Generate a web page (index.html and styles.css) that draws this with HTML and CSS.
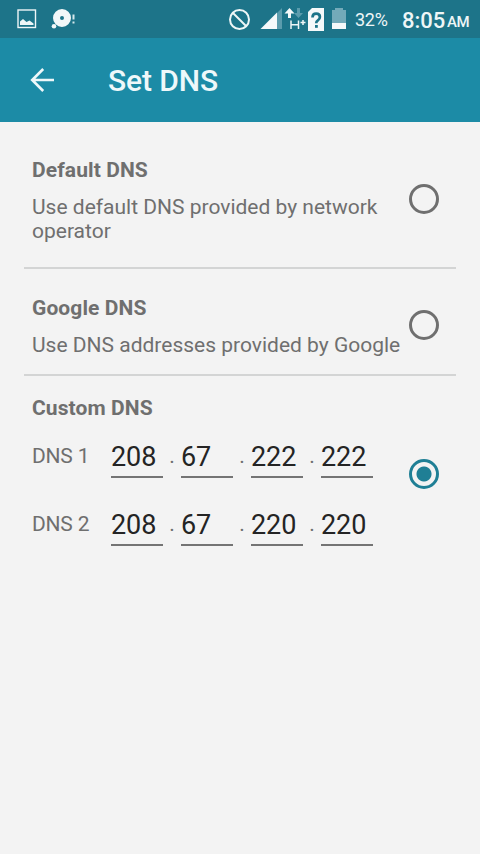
FILE: index.html
```html
<!DOCTYPE html>
<html lang="en">
<head>
<meta charset="utf-8">
<title>Set DNS</title>
<link rel="stylesheet" href="styles.css">
</head>
<body>
<div class="status">
  <svg class="notif" width="80" height="38" viewBox="0 0 80 38">
    <rect x="18" y="10" width="17.500" height="17.500" fill="none" stroke="#eef6f7" stroke-width="1.400"/>
    <path d="M20 25v-3.500l3-2.500 3.500 3 3-1.500 4 3V25z" fill="#eef6f7"/>
    <circle cx="62" cy="18" r="5.500" fill="none" stroke="#f2f7f8" stroke-width="7"/>
    <circle cx="54" cy="26.300" r="2.300" fill="#f2f7f8"/>
    <path d="M73.500 14.500v5M73.500 21.500v2" stroke="#d5e8ec" stroke-width="2"/>
  </svg>
  <svg class="signals" width="122" height="38" viewBox="226 0 122 38">
    <g fill="none" stroke="#eef6f7" stroke-width="2">
      <circle cx="239.500" cy="19.500" r="9.500"/>
      <path d="M232.500 12.500l14 14"/>
    </g>
    <path d="M277 13l5-5v21h-5z" fill="#5b9cad"/>
    <path d="M260.500 29L277 12.500V29z" fill="#f5f9fa"/>
    <path d="M289.500 8l-5 5.500h3.500V18h3v-4.500h3.500z" fill="#f5f9fa"/>
    <path d="M298.500 18l-4.500-5h3V8h3v5h3z" fill="#5b9cad"/>
    <path d="M291 20.500V29M298.500 20.500V29M291 24.700h8M300.500 22.500h5M303 20v5" fill="none" stroke="#eef6f7" stroke-width="1.500"/>
    <path d="M312 8h12v23h-16V12z" fill="#f5f9fa"/>
    <path d="M312.500 17.500q0-3.800 3.700-3.800t3.700 3.300q0 2-2 3.300-1.700 1.100-1.700 3" fill="none" stroke="#1d7489" stroke-width="2.700"/>
    <rect x="315" y="25" width="2.800" height="2.800" fill="#1d7489"/>
    <path d="M332 10h3V8h8v2h3v13h-14z" fill="#73aab9"/>
    <path d="M332 23h14v6h-14z" fill="#f5f9fa"/>
  </svg>
  <span class="battery">32%</span>
  <span class="clock">8:05</span><span class="ampm">AM</span>
</div>
<header class="bar">
  <svg width="26" height="26" viewBox="0 0 26 26" fill="none" stroke="#eef8fa" stroke-width="2.600"><path d="M25 13H3M14.200 2L3.200 13l11 11"/></svg>
  <h1>Set DNS</h1>
</header>
<main>
  <section class="option default">
    <div class="copy"><h2>Default DNS</h2><p>Use default DNS provided by network operator</p></div>
    <span class="radio"></span>
  </section>
  <section class="option google">
    <div class="copy"><h2>Google DNS</h2><p>Use DNS addresses provided by Google</p></div>
    <span class="radio"></span>
  </section>
  <section class="option custom">
    <div class="copy">
      <h2>Custom DNS</h2>
      <div class="row"><span class="label">DNS 1</span><span class="field">208</span><i>.</i><span class="field">67</span><i>.</i><span class="field">222</span><i>.</i><span class="field">222</span></div>
      <div class="row"><span class="label">DNS 2</span><span class="field">208</span><i>.</i><span class="field">67</span><i>.</i><span class="field">220</span><i>.</i><span class="field">220</span></div>
    </div>
    <span class="radio checked"></span>
  </section>
</main>
</body>
</html>
```
FILE: styles.css
```css
* { box-sizing: border-box; }
body {
  margin: 0;
  min-height: 854px;
  background: #f3f3f3;
  color: #6f6f6f;
  font: 21px/24px Roboto, sans-serif;
}
h1, h2, p { margin: 0; }
.status {
  display: flex;
  height: 38px;
  background: #1d7489;
  color: #eef6f7;
  line-height: 38px;
  white-space: nowrap;
}
.status svg { flex: none; }
.notif { margin-right: 146px; }
.battery { width: 47px; padding-left: 7px; font-size: 18px; line-height: 40px; margin-right: 7px; letter-spacing: -0.3px; }
.clock { width: 45px; font-size: 22px; font-weight: 500; line-height: 41px; }
.ampm { font-size: 15px; font-weight: 500; line-height: 44px; letter-spacing: -0.5px; }
.bar {
  display: flex;
  align-items: center;
  height: 84px;
  padding-left: 29px;
  background: #1c8ba6;
  color: #eef8fa;
}
.bar h1 { margin: 2px 0 0 53px; font-size: 30px; font-weight: 500; line-height: 36px; letter-spacing: -0.1px; }
main { padding: 0 24px; }
.option {
  display: flex;
  justify-content: space-between;
  padding: 0 17px 0 8px;
  border-bottom: 2px solid #d3d4d4;
}
.copy { flex: none; width: 370px; }
h2 { font-size: 21px; font-weight: 700; line-height: 24px; letter-spacing: 0.1px; }
p { margin-top: 13px; }
.default { height: 147px; padding-top: 36px; }
.google { height: 107px; padding-top: 27px; }
.custom { height: 190px; padding-top: 20px; border: 0; }
.radio {
  flex: none;
  width: 30px;
  height: 30px;
  margin-left: -1px;
  border: 3px solid #6f6f6f;
  border-radius: 50%;
}
.default .radio { margin-top: 26px; }
.google .radio { margin-top: 14px; }
.custom .radio { margin-top: 63px; }
.checked {
  border-color: #1f7f95;
  background: radial-gradient(circle, #1f7f95 7px, transparent 8px);
}
.row { display: flex; height: 42px; margin-top: 16px; }
.row + .row { margin-top: 26px; }
.label { width: 79px; padding-top: 8px; letter-spacing: -0.2px; }
.field {
  width: 52px;
  height: 42px;
  padding-top: 5px;
  border-bottom: 2px solid #747474;
  color: #242424;
  font-size: 27px;
  line-height: 32px;
  letter-spacing: -0.1px;
}
.row i { width: 18px; padding-top: 8px; font-style: normal; text-align: center; }
```
